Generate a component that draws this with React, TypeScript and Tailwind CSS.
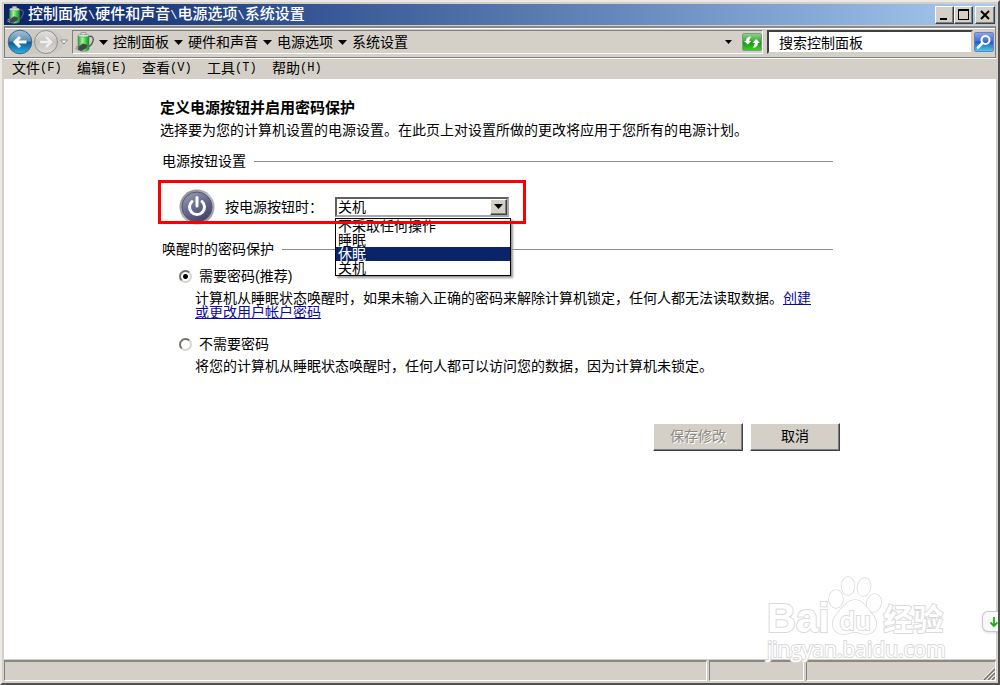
import { useState, type ReactNode } from "react";

const titleParts = ["控制面板", "硬件和声音", "电源选项", "系统设置"];

const menus = [
  { label: "文件", key: "F" },
  { label: "编辑", key: "E" },
  { label: "查看", key: "V" },
  { label: "工具", key: "T" },
  { label: "帮助", key: "H" },
];

const powerActions = ["不采取任何操作", "睡眠", "休眠", "关机"];

const raised =
  "border border-t-white border-l-white border-r-[#404040] border-b-[#404040] bg-[#d4d0c8] shadow-[inset_-1px_-1px_0_#808080]";

function DownArrow() {
  return (
    <svg width="9" height="5" viewBox="0 0 9 5" className="shrink-0" aria-hidden="true">
      <path d="M0 0h9L4.500 5z" fill="#000" />
    </svg>
  );
}

function BatteryIcon({ size }: { size: number }) {
  return (
    <svg width={size} height={size} viewBox="0 0 20 20" className="shrink-0" aria-hidden="true">
      <defs>
        <linearGradient id="battery" x1="0" x2="1">
          <stop offset="0" stopColor="#2c9a3c" />
          <stop offset="0.400" stopColor="#a4f78e" />
          <stop offset="0.700" stopColor="#3fce48" />
          <stop offset="1" stopColor="#1a8a2c" />
        </linearGradient>
      </defs>
      <path d="M14 5c4-2 6 1 5 4s-2 5-5 6" fill="none" stroke="#555c60" strokeWidth="1.400" />
      <rect x="7" y="0.300" width="5" height="3" rx="1" fill="#e2e8ea" stroke="#5c6668" strokeWidth="0.600" />
      <path d="M4 4c0-2 11-2 11 0v13c0 3-11 3-11 0z" fill="url(#battery)" stroke="#5b7a62" strokeWidth="0.600" />
      <ellipse cx="9.500" cy="3.600" rx="5.500" ry="1.400" fill="#d7e4dc" stroke="#7d8c82" strokeWidth="0.500" />
      <path d="M4 15l5-3.500 4.500 1.500-1 3-5 3-3.500-1.500z" fill="#41474a" />
      <path d="M1.500 16.500l3 1.500M2 14.500l2.500 1.500" stroke="#8e9698" strokeWidth="1.200" />
    </svg>
  );
}

function PowerIcon() {
  return (
    <svg width="36" height="36" viewBox="0 0 36 36" className="shrink-0" aria-hidden="true">
      <defs>
        <linearGradient id="powerRim" x1="0" y1="0" x2="1" y2="1">
          <stop offset="0" stopColor="#808084" />
          <stop offset="0.500" stopColor="#b9b9bd" />
          <stop offset="1" stopColor="#95959a" />
        </linearGradient>
        <linearGradient id="powerFace" x1="0" y1="0" x2="0.600" y2="1">
          <stop offset="0" stopColor="#a3a5be" />
          <stop offset="0.500" stopColor="#6b6d92" />
          <stop offset="1" stopColor="#43456c" />
        </linearGradient>
      </defs>
      <circle cx="18" cy="18" r="17.500" fill="url(#powerRim)" />
      <circle cx="18" cy="18" r="15" fill="url(#powerFace)" stroke="#55576c" strokeWidth="1" />
      <path d="M13 12.500a7.500 7.500 0 1 0 10 0" fill="none" stroke="#fff" strokeWidth="3" strokeLinecap="round" />
      <path d="M18 8.500v8.500" stroke="#fff" strokeWidth="3" strokeLinecap="round" />
    </svg>
  );
}

function NavIcon() {
  return (
    <svg width="66" height="28" viewBox="0 0 66 28" aria-hidden="true">
      <defs>
        <linearGradient id="back" x1="0" y1="0" x2="0" y2="1">
          <stop offset="0" stopColor="#a9c3d6" />
          <stop offset="0.450" stopColor="#5c8fb6" />
          <stop offset="0.520" stopColor="#0f5c96" />
          <stop offset="1" stopColor="#2cb4ea" />
        </linearGradient>
        <linearGradient id="forward" x1="0" y1="0" x2="0" y2="1">
          <stop offset="0" stopColor="#e3e2df" />
          <stop offset="0.500" stopColor="#c5c4c1" />
          <stop offset="1" stopColor="#dddcd8" />
        </linearGradient>
      </defs>
      <path d="M14 2h26c10 0 18 5 18 12s-8 12-18 12H14z" fill="#c4c1ba" opacity="0.500" />
      <circle cx="14" cy="14" r="11.800" fill="url(#back)" stroke="#3f6787" />
      <path d="M20.500 14H9.500M14 9l-5 5 5 5" fill="none" stroke="#fff" strokeWidth="3" />
      <circle cx="40" cy="14" r="11.500" fill="url(#forward)" stroke="#8e8e8c" />
      <path d="M34 14h11M40 9l5 5-5 5" fill="none" stroke="#f1f0ee" strokeWidth="2.400" />
      <path d="M54.500 12h7L58 16z" fill="#f4f4f4" stroke="#83868b" strokeWidth="0.900" />
    </svg>
  );
}

function RefreshIcon() {
  return (
    <svg width="20" height="18" viewBox="0 0 20 18" aria-hidden="true">
      <defs>
        <linearGradient id="refresh" x1="0" y1="0" x2="0" y2="1">
          <stop offset="0" stopColor="#8fd48b" />
          <stop offset="0.450" stopColor="#3daa39" />
          <stop offset="0.500" stopColor="#149410" />
          <stop offset="1" stopColor="#3fd02c" />
        </linearGradient>
      </defs>
      <rect x="0.500" y="0.500" width="19" height="17" rx="1.500" fill="url(#refresh)" stroke="#7f9b7e" />
      <path d="M2 8l2 0c0-3 2-4.500 5-4.500l-2 4.500h2.200L5.800 11.500z" fill="#fff" />
      <path d="M18 10h-2c0 3-2 4.800-5 4.800l2-4.800h-2.500L14.200 6z" fill="#fff" />
    </svg>
  );
}

function SearchIcon() {
  return (
    <svg width="20" height="20" viewBox="0 0 20 20" aria-hidden="true">
      <defs>
        <linearGradient id="search" x1="0" y1="0" x2="0" y2="1">
          <stop offset="0" stopColor="#8fa5e6" />
          <stop offset="0.450" stopColor="#4a6fd0" />
          <stop offset="0.500" stopColor="#2557c2" />
          <stop offset="1" stopColor="#45d3ee" />
        </linearGradient>
      </defs>
      <rect x="0.500" y="0.500" width="19" height="19" rx="1.500" fill="url(#search)" stroke="#6b83b5" />
      <circle cx="11.500" cy="8" r="4" fill="none" stroke="#fff" strokeWidth="2" />
      <path d="M8.500 11L4 15.500" stroke="#fff" strokeWidth="2.600" strokeLinecap="round" />
    </svg>
  );
}

function TitleBar() {
  return (
    <header className="flex h-[21px] items-center bg-linear-to-r from-[#0a246a] to-[#a6caf0] pr-px pl-[2px]">
      <BatteryIcon size={18} />
      <h1 className="ml-1 flex-1 truncate text-[15px] leading-5 font-medium text-white">
        {titleParts.map((part, i) => (
          <span key={part}>
            {i > 0 && <span className="font-['Liberation_Mono',monospace] text-xs leading-5">\</span>}
            {part}
          </span>
        ))}
      </h1>
      <div className="flex">
        <button type="button" aria-label="最小化" className={`h-[18px] w-[19px] ${raised}`}>
          <svg width="17" height="16" viewBox="0 0 17 16"><path d="M4 11h7v2H4z" /></svg>
        </button>
        <button type="button" aria-label="最大化" className={`h-[18px] w-[19px] ${raised}`}>
          <svg width="17" height="16" viewBox="0 0 17 16"><path d="M3 2h11v11H3zM4 4v8h9V4z" fillRule="evenodd" /></svg>
        </button>
        <button type="button" aria-label="关闭" className={`ml-[2px] h-[18px] w-[20px] ${raised}`}>
          <svg width="18" height="16" viewBox="0 0 18 16"><path d="M5 4l8 8M13 4l-8 8" stroke="#000" strokeWidth="2" /></svg>
        </button>
      </div>
    </header>
  );
}

function Toolbar() {
  return (
    <div className="mt-px flex h-[32px] items-center border border-t-2 border-t-[#8b8a87] border-r-[#808080] border-b-[#808080] border-l-[#808080] pr-px pb-px shadow-[0_1px_0_#fff,inset_0_1px_0_#fff]">
      <button type="button" aria-label="后退和前进" className="ml-px">
        <NavIcon />
      </button>
      <nav
        aria-label="地址"
        className="flex h-[24px] flex-1 items-center border border-t-[#808080] border-r-white border-b-white border-l-[#808080] pl-px"
      >
        <BatteryIcon size={20} />
        {titleParts.map((name) => (
          <span key={name} className="ml-[5px] flex items-center gap-[5px]">
            <DownArrow />
            <a href="#" className="text-sm leading-5">{name}</a>
          </span>
        ))}
        <button type="button" aria-label="历史记录" className="mr-[10px] ml-auto">
          <svg width="7" height="4" viewBox="0 0 7 4"><path d="M0 0h7L3.500 4z" /></svg>
        </button>
        <button type="button" aria-label="刷新">
          <RefreshIcon />
        </button>
      </nav>
      <input
        type="text"
        aria-label="搜索控制面板"
        defaultValue="搜索控制面板"
        className="ml-1 h-[24px] w-[206px] border-2 border-t-[#404040] border-r-[#d4d0c8] border-b-[#d4d0c8] border-l-[#404040] bg-white pb-px pl-[10px] text-sm leading-5 outline-none"
      />
      <button type="button" aria-label="搜索" className="ml-px">
        <SearchIcon />
      </button>
    </div>
  );
}

function MenuBar() {
  return (
    <nav aria-label="菜单" className="mt-px flex h-[20px] items-center gap-[15px] pb-[2px] pl-2">
      {menus.map((menu) => (
        <button key={menu.key} type="button" className="flex w-[50px] items-center text-sm leading-[18px] whitespace-nowrap">
          {menu.label}
          <span className="font-['Liberation_Mono',monospace] text-xs leading-[18px]">({menu.key})</span>
        </button>
      ))}
    </nav>
  );
}

function SectionTitle({ children }: { children: ReactNode }) {
  return (
    <div className="flex items-center gap-2 pr-[7px] pl-1">
      <h3 className="text-sm leading-5">{children}</h3>
      <div className="h-px flex-1 bg-[#8c8c8c]" />
    </div>
  );
}

function PowerButtonRow() {
  const [action, setAction] = useState("关机");

  return (
    <div className="relative mt-[9px] flex h-[44px] w-[368px] items-center pt-[9px] pl-[21px]">
      <PowerIcon />
      <label htmlFor="power-action" className="ml-[10px] w-[110px] text-sm leading-5">
        按电源按钮时：
      </label>
      <div className="relative">
        <select
          id="power-action"
          value={action}
          onChange={(e) => setAction(e.target.value)}
          className="block h-[20px] w-[174px] appearance-none border-2 border-t-[#606060] border-r-[#a8a8a8] border-b-[#a8a8a8] border-l-[#606060] bg-white pl-px text-sm leading-4 outline-none"
        >
          {powerActions.map((name) => (
            <option key={name}>{name}</option>
          ))}
        </select>
        <span className={`pointer-events-none absolute top-[2px] right-[2px] flex h-[16px] w-[17px] items-center justify-center ${raised}`}>
          <DownArrow />
        </span>
        <ul
          role="listbox"
          aria-label="按电源按钮时"
          className="absolute top-[21px] left-0 z-10 w-[176px] border border-black bg-white text-sm leading-[14px] shadow-[2px_2px_2px_#999]"
        >
          {powerActions.map((name) => (
            <li
              key={name}
              role="option"
              aria-selected={name === "休眠"}
              onClick={() => setAction(name)}
              className={`pl-[2px] ${name === "休眠" ? "bg-[#0a246a] text-white" : ""}`}
            >
              {name}
            </li>
          ))}
        </ul>
      </div>
      <div className="pointer-events-none absolute inset-0 z-20 border-3 border-[#fb0000]" />
    </div>
  );
}

type PasswordOptionProps = {
  id: string;
  label: string;
  checked: boolean;
  onSelect: () => void;
  children: ReactNode;
};

function PasswordOption({ id, label, checked, onSelect, children }: PasswordOptionProps) {
  return (
    <div className="pr-[22px] pl-[21px]">
      <div className="flex items-center">
        <input
          id={id}
          type="radio"
          name="wake-password"
          checked={checked}
          onChange={onSelect}
          className="size-[13px] appearance-none rounded-full border-2 border-t-[#707070] border-r-[#d8d5ce] border-b-[#d8d5ce] border-l-[#707070] bg-white checked:bg-[radial-gradient(circle,#000_0_2px,#fff_3px)]"
        />
        <label htmlFor={id} className="ml-[7px] text-sm leading-5">{label}</label>
      </div>
      <p className="mt-[5px] pl-4 text-sm leading-[14px]">{children}</p>
    </div>
  );
}

function Watermark() {
  return (
    <div
      aria-hidden="true"
      className="pointer-events-none absolute right-[51px] bottom-[22px] w-[180px] font-['Open_Sans','Noto_Sans_CJK_SC',sans-serif] text-white [paint-order:stroke] [-webkit-text-stroke:2px_#dadada]"
    >
      <div className="flex h-[62px] items-end">
        <span className="font-['Liberation_Sans',sans-serif] text-[40px] leading-[36px] font-bold">Bai</span>
        <div className="relative -ml-px h-[62px] w-[54px]">
          <svg width="54" height="62" viewBox="0 0 54 62" fill="#fff" stroke="#dadada" strokeWidth="1.500">
            <ellipse cx="8" cy="25" rx="7" ry="9" />
            <ellipse cx="20" cy="12" rx="6.500" ry="9" />
            <ellipse cx="36" cy="13" rx="6.500" ry="9" transform="rotate(12 36 13)" />
            <ellipse cx="46" cy="29" rx="7" ry="9" transform="rotate(15 46 29)" />
            <path d="M27 26c8 0 11 7 17 14 8 9 4 20-6 20-5 0-7-2-11-2s-7 2-12 2C5 60 1 49 9 40c6-7 10-14 18-14z" />
          </svg>
          <span className="absolute inset-x-0 bottom-[4px] text-center text-[25px] leading-6 font-semibold">du</span>
        </div>
        <span className="ml-px text-[30px] leading-[34px] font-bold">经验</span>
      </div>
      <div className="mt-px text-[21px] leading-6">jingyan.baidu.com</div>
    </div>
  );
}

function StatusBar() {
  const pane = "border border-t-2 border-t-[#8c8984] border-l-[#808080] border-r-white border-b-white";

  return (
    <footer className="mt-px flex h-[21px] gap-[2px]">
      <div className={`flex-1 ${pane}`} />
      <div className={`w-[95px] ${pane}`} />
      <div className={`flex w-[190px] items-end justify-end ${pane}`}>
        <svg width="12" height="12" viewBox="0 0 12 12" aria-hidden="true">
          <path d="M1 12L12 1M5 12l7-7M9 12l3-3" stroke="#77746e" strokeWidth="1.500" />
          <path d="M0 11L11 0M4 11l7-7M8 11l3-3" stroke="#fff" strokeWidth="0.700" />
        </svg>
      </div>
    </footer>
  );
}

export default function App() {
  const [needsPassword, setNeedsPassword] = useState(true);

  return (
    <div className="relative flex min-h-screen flex-col overflow-hidden border-2 border-t-[#ebe9e4] border-r-[#505050] border-b-[#505050] border-l-[#ebe9e4] bg-[#d4d0c8] p-[2px] font-['Liberation_Sans','Noto_Sans_CJK_SC',sans-serif] text-black">
      <TitleBar />
      <Toolbar />
      <MenuBar />

      <main className="flex-1 bg-white pt-[19px] pl-[154px]">
        <div className="max-w-[682px]">
          <h2 className="pl-[2px] text-[15px] leading-5 font-bold">定义电源按钮并启用密码保护</h2>
          <p className="mt-[2px] pl-[2px] text-sm leading-5">
            选择要为您的计算机设置的电源设置。在此页上对设置所做的更改将应用于您所有的电源计划。
          </p>

          <section className="mt-[11px]">
            <SectionTitle>电源按钮设置</SectionTitle>
            <PowerButtonRow />
          </section>

          <section className="mt-[15px]">
            <SectionTitle>唤醒时的密码保护</SectionTitle>
            <div className="mt-[7px] flex flex-col gap-[15px]">
              <PasswordOption
                id="password-required"
                label="需要密码(推荐)"
                checked={needsPassword}
                onSelect={() => setNeedsPassword(true)}
              >
                计算机从睡眠状态唤醒时，如果未输入正确的密码来解除计算机锁定，任何人都无法读取数据。
                <a href="#" className="text-[#0a0a9c] underline">创建或更改用户帐户密码</a>
              </PasswordOption>
              <PasswordOption
                id="password-none"
                label="不需要密码"
                checked={!needsPassword}
                onSelect={() => setNeedsPassword(false)}
              >
                将您的计算机从睡眠状态唤醒时，任何人都可以访问您的数据，因为计算机未锁定。
              </PasswordOption>
            </div>
          </section>

          <div className="mt-[50px] flex justify-end gap-[7px]">
            <button
              type="button"
              disabled
              className={`h-[28px] w-[90px] pb-[2px] text-sm text-[#8c8a85] [text-shadow:1px_1px_0_#fff] ${raised}`}
            >
              保存修改
            </button>
            <button type="button" className={`h-[28px] w-[90px] pb-[2px] text-sm ${raised}`}>
              取消
            </button>
          </div>
        </div>
      </main>

      <StatusBar />
      <Watermark />

      <button
        type="button"
        aria-label="下载"
        className="absolute -right-[2px] bottom-[51px] flex h-[21px] w-[18px] items-center justify-end rounded-l-md border border-r-0 border-[#c8c8c8] bg-[#f8f8f8] pr-px shadow"
      >
        <svg width="10" height="12" viewBox="0 0 10 12" fill="none" stroke="#12b412" strokeWidth="1.800">
          <path d="M5 1v9M1.500 6.500L5 10l3.500-3.500" />
        </svg>
      </button>
    </div>
  );
}
